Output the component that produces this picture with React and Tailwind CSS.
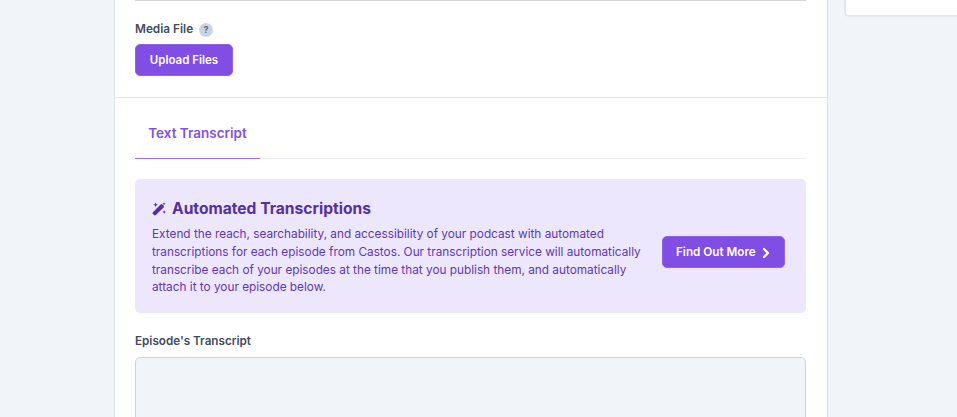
import React from 'react';
import { ChevronRight } from 'lucide-react';

const WandIcon = () => (
  <svg viewBox="0 0 14 14" className="h-[14px] w-[14px] shrink-0" fill="currentColor">
    <path d="M.9 10.2 8.6 2.4a1.3 1.3 0 0 1 1.8 0l1.2 1.2a1.3 1.3 0 0 1 0 1.8l-7.7 7.7a1.3 1.3 0 0 1-1.8 0L.9 12a1.3 1.3 0 0 1 0-1.8Z" />
    <path d="M3.6.6 4.3 2.1 5.8 2.8 4.3 3.5 3.6 5 2.9 3.5 1.4 2.8 2.9 2.1Z" />
    <path d="M12.2 8.2 12.8 9.4 14 10 12.8 10.6 12.2 11.8 11.6 10.6 10.4 10 11.6 9.4Z" />
    <path d="M12 .2 12.5 1.2 13.5 1.7 12.5 2.2 12 3.2 11.5 2.2 10.5 1.7 11.5 1.2Z" />
  </svg>
);

const App = () => {
  return (
    <div className="flex h-[417px] overflow-hidden bg-[#f1f5f9] pl-[114px] font-['Inter',sans-serif]">
      <div className="h-full w-[714px] shrink-0 border-x border-[#d9e0ea] bg-white">
        <div className="border-b border-[#e2e8f0] pb-[21px] pl-5 pr-[21px]">
          <div className="h-px bg-[#d6d6d6]" />
          <div className="mt-[21px] flex h-4 items-center gap-[6px] text-[11.8px] font-semibold text-[#3f4c63]">
            <span>Media File</span>
            <span className="flex h-[14px] w-[14px] items-center justify-center rounded-full bg-[#cbd5e1] text-[9px] font-bold text-[#5b6b82]">?</span>
          </div>
          <button className="mt-[6px] block h-[32px] w-[98px] rounded-[5px] border border-[#8f62ea] bg-[#804ee4] pt-px text-[11.5px] font-semibold text-white">
            Upload Files
          </button>
        </div>

        <div className="pl-5 pr-[21px]">
          <div className="flex h-[61px] border-b border-[#e9edf3]">
            <div className="-mb-px flex w-[125px] items-center justify-center border-b border-[#9b6ff0] pt-[10px] text-[13.5px] font-semibold text-[#8250e6]">
              Text Transcript
            </div>
          </div>

          <div className="mt-5 flex h-[134px] items-start justify-between rounded-[5px] bg-[#ede7fd] pl-[17px] pr-[21px] pt-[20px]">
            <div className="w-[490px] text-[#5f38b5]">
              <div className="flex items-center gap-[6px] text-[15.6px] font-bold leading-5 text-[#5430a3]">
                <WandIcon />
                <span>Automated Transcriptions</span>
              </div>
              <p className="mt-[7px] text-[11.8px] leading-[17.8px]">
                Extend the reach, searchability, and accessibility of your podcast with automated transcriptions for each episode from Castos. Our transcription service will automatically transcribe each of your episodes at the time that you publish them, and automatically attach it to your episode below.
              </p>
            </div>
            <button className="mt-[37px] flex h-[32px] w-[123px] items-center gap-[2px] rounded-[5px] border border-[#8f62ea] bg-[#804ee4] pl-[13px] pt-px text-[11.7px] font-semibold text-white">
              <span>Find Out More</span>
              <ChevronRight size={16} strokeWidth={3.5} />
            </button>
          </div>

          <div className="mt-[20px] text-[11.7px] font-semibold leading-4 text-[#3f4c63]">Episode's Transcript</div>
          <div className="mt-[8px] h-[120px] rounded-[5px] border border-[#cbd5e1] bg-[#f1f5f9]" />
        </div>
      </div>

      <div className="ml-4 h-[17px] flex-1 rounded-bl-[5px] border-b-2 border-l-2 border-[#e2e8f0] bg-white" />
    </div>
  );
};

export default App;
